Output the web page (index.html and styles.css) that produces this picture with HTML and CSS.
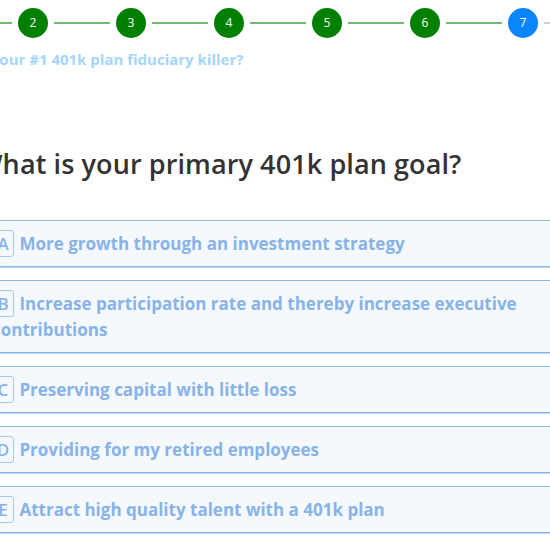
FILE: index.html
```html
<!DOCTYPE html>
<html lang="en">
<head>
<meta charset="utf-8">
<title>401k Quiz</title>
<link rel="stylesheet" href="styles.css">
</head>
<body>
<div class="page">
  <div class="stepper">
    <span class="step done">1</span><span class="link done"></span>
    <span class="step done">2</span><span class="link done"></span>
    <span class="step done">3</span><span class="link done"></span>
    <span class="step done">4</span><span class="link done"></span>
    <span class="step done">5</span><span class="link done"></span>
    <span class="step done">6</span><span class="link done"></span>
    <span class="step current">7</span><span class="link"></span>
    <span class="step">8</span>
  </div>
  <p class="subtitle">Your #1 401k plan fiduciary killer?</p>
  <h1 class="question">What is your primary 401k plan goal?</h1>
  <ul class="options">
    <li class="option"><span class="badge">A</span> <span class="label">More growth through an investment strategy</span></li>
    <li class="option"><span class="badge">B</span> <span class="label">Increase participation rate and thereby increase executive contributions</span></li>
    <li class="option"><span class="badge">C</span> <span class="label">Preserving capital with little loss</span></li>
    <li class="option"><span class="badge">D</span> <span class="label">Providing for my retired employees</span></li>
    <li class="option"><span class="badge">E</span> <span class="label">Attract high quality talent with a 401k plan</span></li>
  </ul>
</div>
</body>
</html>
```

FILE: styles.css
```css
html, body {
  margin: 0;
  padding: 0;
  background: #ffffff;
  overflow: hidden;
}
body {
  font-family: "Open Sans", "Noto Sans", sans-serif;
  width: 550px;
  height: 550px;
}
.page {
  margin-left: -80px;
  width: 700px;
}
.stepper {
  display: flex;
  align-items: center;
  margin-top: 8px;
  height: 30px;
}
.step {
  flex: 0 0 30px;
  height: 30px;
  border-radius: 50%;
  background: #e9ecef;
  color: #ffffff;
  font-size: 12px;
  line-height: 30px;
  text-align: center;
}
.step.done { background: #008000; }
.step.current { background: #0a84ff; }
.link {
  flex: 0 0 56px;
  height: 2px;
  margin: 0 6px;
  background: #cfcfcf;
}
.link.done { background: #74b874; }
.subtitle {
  margin: 11px 0 0 70px;
  font-size: 15px;
  font-weight: 700;
  color: #a6d5fb;
  line-height: 21px;
}
.question {
  margin: 75px 0 0 57px;
  font-size: 27px;
  font-weight: 600;
  color: #333333;
  line-height: 38px;
  letter-spacing: 0.1px;
}
.options {
  list-style: none;
  margin: 37px 0 0 58px;
  padding: 0;
  width: 640px;
  display: flex;
  flex-direction: column;
  gap: 13px;
}
.option {
  background: #f5f9fe;
  border: 1px solid #8fb8ea;
  box-shadow: 0 1px 0 #b9d3f3;
  padding: 9px 60px 9px 13px;
  font-size: 17px;
  font-weight: 700;
  line-height: 26px;
  color: #88b3e8;
}
.badge {
  display: inline-block;
  width: 20px;
  text-align: center;
  border: 1px solid #a9c8ef;
  border-radius: 3px;
  line-height: 25px;
  font-weight: 600;
  margin-right: 1px;
}
```
